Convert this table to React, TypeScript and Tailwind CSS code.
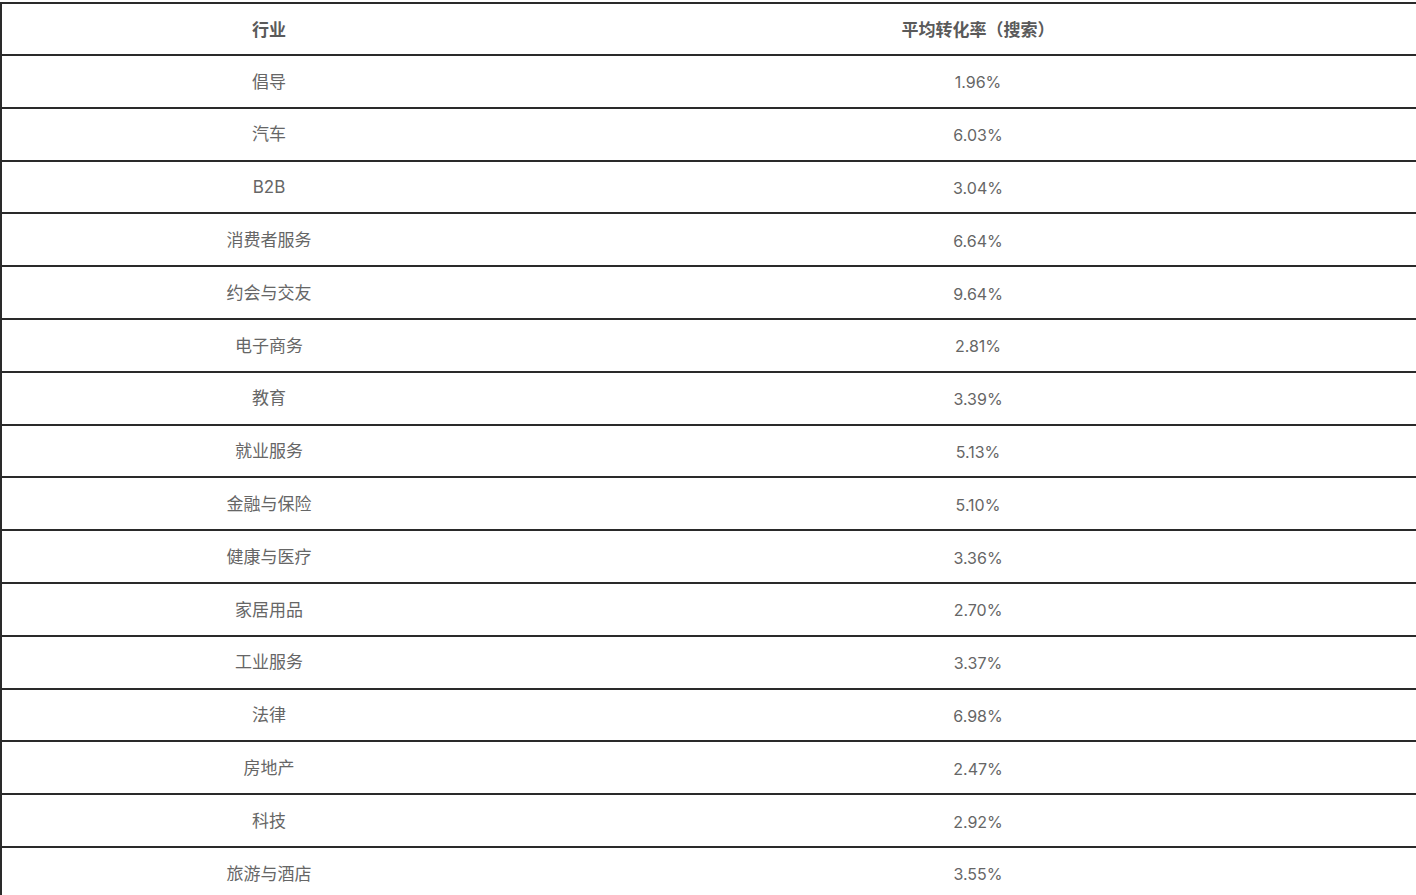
const rows: [string, string][] = [
  ['倡导', '1.96%'],
  ['汽车', '6.03%'],
  ['B2B', '3.04%'],
  ['消费者服务', '6.64%'],
  ['约会与交友', '9.64%'],
  ['电子商务', '2.81%'],
  ['教育', '3.39%'],
  ['就业服务', '5.13%'],
  ['金融与保险', '5.10%'],
  ['健康与医疗', '3.36%'],
  ['家居用品', '2.70%'],
  ['工业服务', '3.37%'],
  ['法律', '6.98%'],
  ['房地产', '2.47%'],
  ['科技', '2.92%'],
  ['旅游与酒店', '3.55%'],
];

export default function App() {
  return (
    <div
      className="h-[895px] w-[1416px] overflow-hidden bg-white pt-[2px]"
      style={{ fontFamily: 'Inter, "Noto Sans CJK SC", sans-serif' }}
    >
      <div className="w-[1420px] border-l-2 border-t-2 border-[#2a2a2a]">
        {/* HEADER */}
        <div className="flex h-[52px] items-center border-b-2 border-[#2a2a2a] pt-[3px] text-[17px] font-semibold text-[#5a5a5a]">
          <div className="w-[534px] text-center">行业</div>
          <div className="flex-1 text-center">平均转化率（搜索）</div>
        </div>

        {/* BODY */}
        {rows.map(([name, rate]) => (
          <div
            key={name}
            className="flex h-[52.8px] items-center border-b-2 border-[#2a2a2a] pt-[2px] text-[#666]"
          >
            <div className="w-[534px] text-center text-[17px]">{name}</div>
            <div className="flex-1 text-center text-[16px]">{rate}</div>
          </div>
        ))}
      </div>
    </div>
  );
}
